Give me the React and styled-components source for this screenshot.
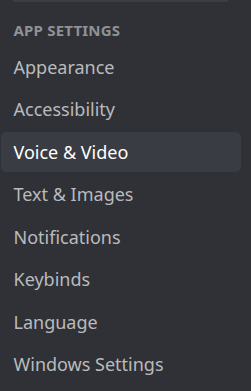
import React from "react";
import styled, { createGlobalStyle } from "styled-components";

const GlobalStyle = createGlobalStyle`
  html, body {
    margin: 0;
    padding: 0;
    background: #2f3136;
  }
  body {
    font-family: "Noto Sans", "Open Sans", sans-serif;
  }
`;

const Sidebar = styled.nav`
  width: 251px;
  height: 391px;
  overflow: hidden;
  background: #2f3136;
  padding-left: 1px;
  box-sizing: border-box;
`;

const Divider = styled.div`
  height: 2px;
  margin: 0 23px 10px 12px;
  background: #3b3d42;
`;

const Header = styled.h2`
  margin: 0;
  padding: 7.5px 12.5px;
  font-size: 15px;
  line-height: 20px;
  font-weight: 700;
  text-transform: uppercase;
  color: #8e9297;
  letter-spacing: 0.2px;
`;

const Item = styled.div`
  width: 240px;
  height: 40px;
  box-sizing: border-box;
  margin-bottom: 2.5px;
  padding: 0 12.5px 1px;
  display: flex;
  align-items: center;
  border-radius: 5px;
  font-size: 18px;
  color: ${(p) => (p.selected ? "#ffffff" : "#b9bbbe")};
  background: ${(p) => (p.selected ? "#393c43" : "transparent")};
  cursor: pointer;
`;

const items = [
  "Appearance",
  "Accessibility",
  "Voice & Video",
  "Text & Images",
  "Notifications",
  "Keybinds",
  "Language",
  "Windows Settings",
];

export default function App() {
  return (
    <>
      <GlobalStyle />
      <Sidebar>
        <Divider />
        <Header>App Settings</Header>
        {items.map((name) => (
          <Item key={name} selected={name === "Voice & Video"}>
            {name}
          </Item>
        ))}
      </Sidebar>
    </>
  );
}
